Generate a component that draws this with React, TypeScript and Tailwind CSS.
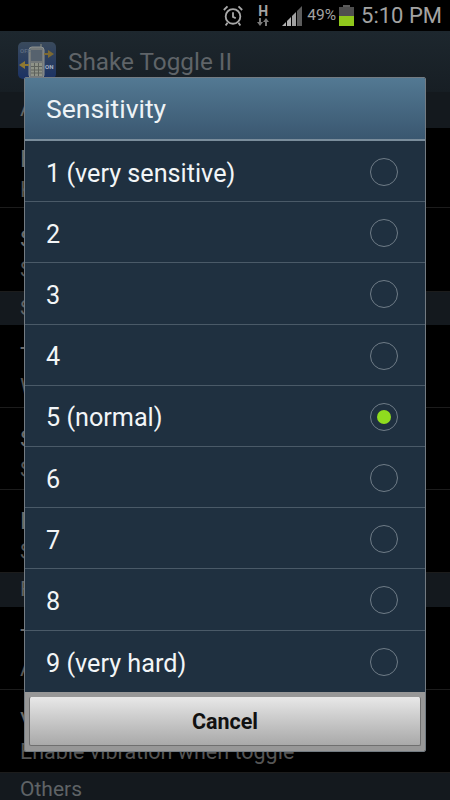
const OPTIONS = ['1 (very sensitive)', '2', '3', '4', '5 (normal)', '6', '7', '8', '9 (very hard)']
const SELECTED = '5 (normal)'

const SETTINGS: Array<{ section: string; height: string; rows: Array<{ title: string; summary: string; height: string }> }> = [
  {
    section: 'Appearance',
    height: 'h-[36px]',
    rows: [
      { title: 'Enable service', summary: 'Keep the service running', height: 'h-[80px]' },
      { title: 'Start at boot', summary: 'Start service on boot', height: 'h-[84px]' },
    ],
  },
  {
    section: 'Shake',
    height: 'h-[33px]',
    rows: [
      { title: 'Toggle', summary: 'Wi-Fi', height: 'h-[83px]' },
      { title: 'Sensitivity', summary: 'Shake sensitivity', height: 'h-[82px]' },
      { title: 'Duration', summary: 'Shake duration', height: 'h-[83px]' },
    ],
  },
  {
    section: 'Feedback',
    height: 'h-[34px]',
    rows: [
      { title: 'Tone', summary: 'Alert when toggle', height: 'h-[83px]' },
      { title: 'Vibration', summary: 'Enable vibration when toggle', height: 'h-[83px]' },
    ],
  },
]

function AppIcon() {
  return (
    <svg width="38" height="37" viewBox="0 0 38 37" className="shrink-0">
      <defs>
        <linearGradient id="ico" x1="0" y1="0" x2="0" y2="1">
          <stop offset="0" stopColor="#3a4a5c" />
          <stop offset="1" stopColor="#1b3264" />
        </linearGradient>
      </defs>
      <rect width="38" height="37" rx="5" fill="url(#ico)" />
      <path d="M23 2v4" stroke="#6f7674" strokeWidth="1.500" />
      <rect x="11" y="5" width="15" height="31" rx="3" fill="#74797a" stroke="#8d9290" />
      <rect x="13" y="8" width="11" height="11" fill="#56626e" />
      <rect x="13" y="21" width="11" height="13" fill="#8f9388" />
      <path d="M13 24.500h11M13 28h11M13 31h11M16.500 21v13M20.500 21v13" stroke="#5e625c" />
      <path d="M26 11h4v-3l6 4-6 4v-3h-4z" fill="#7d6a33" />
      <path d="M11 22h-4v-3l-6 4 6 4v-3h4z" fill="#8f7830" />
      <text x="2" y="11" fontSize="6" fontWeight="700" fill="#5a6a80">OFF</text>
      <text x="27" y="27" fontSize="6" fontWeight="700" fill="#a9b4c6">ON</text>
    </svg>
  )
}

function StatusBar() {
  return (
    <div className="h-[31px] bg-black flex items-center justify-end pr-[8px] text-[#a3a3a3]">
      <svg width="22" height="23" viewBox="0 0 24 24" fill="none" stroke="#a8a8a8" strokeWidth="2" className="mr-[12px]">
        <circle cx="12" cy="13" r="8" />
        <path d="M12 8.500v5l3 1.500" />
        <path d="M2 6l4-4M22 6l-4-4M6 20l-2 3M18 20l2 3" />
      </svg>
      <div className="flex flex-col items-center mr-[12px] w-[14px]">
        <span className="text-[14px] leading-[13px] font-bold">H</span>
        <svg width="14" height="9" viewBox="0 0 14 9" fill="#7a7a7a">
          <path d="M3 0h2v4h2l-3 4-3-4h2zM9 8h2v-4h2l-3-4-3 4h2z" />
        </svg>
      </div>
      <svg width="21" height="21" viewBox="0 0 21 21" className="mr-[4px]">
        <path d="M0 21l4-4v4z" fill="#b0b0b0" />
        <path d="M5 16l4-4v9h-4z" fill="#b0b0b0" />
        <path d="M10 11l4-4v14h-4z" fill="#a0a0a0" />
        <path d="M15 6l5-5v20h-5z" fill="#5c5c5c" />
      </svg>
      <span className="text-[15.500px] leading-none mr-[3px]">49%</span>
      <div className="w-[15px] h-[21px] flex flex-col items-center mr-[7px]">
        <div className="w-[7px] h-[2px] bg-[#5c5c5c]" />
        <div className="w-[15px] h-[9px] bg-[#4f4f4f]" />
        <div className="w-[15px] h-[10px] bg-[#8fc71c]" />
      </div>
      <span className="text-[22px] leading-none">5:10 PM</span>
    </div>
  )
}

function Background() {
  return (
    <div className="h-[800px] overflow-hidden bg-black">
      <StatusBar />
      <div className="h-[61px] bg-gradient-to-b from-[#1d272e] to-[#171e24] flex items-start pl-[18px] pt-[11px] gap-[12px]">
        <AppIcon />
        <span className="text-[24.300px] leading-[40px] text-[#5f6468]">Shake Toggle II</span>
      </div>
      {SETTINGS.map((group) => (
        <div key={group.section}>
          <div className={`${group.height} bg-[#14191e] flex items-center pl-[20px] text-[21px] text-[#5f6366]`}>
            {group.section}
          </div>
          {group.rows.map((row) => (
            <div key={row.title} className={`${row.height} border-b border-[#1c1c1c] pl-[20px] pt-[16px] flex flex-col`}>
              <span className="text-[24px] leading-[30px] text-[#6a6a6a]">{row.title}</span>
              <span className="text-[21.500px] leading-[31px] text-[#555]">{row.summary}</span>
            </div>
          ))}
        </div>
      ))}
      <div className="h-[27px] pt-[6px] bg-[#14191e] flex items-start pl-[20px] text-[21px] leading-[21px] text-[#5f6366]">Others</div>
    </div>
  )
}

function Radio({ checked }: { checked: boolean }) {
  return (
    <div className="w-[28px] h-[28px] rounded-full border border-[#6f7c87] flex items-center justify-center">
      {checked && <div className="w-[14px] h-[14px] rounded-full bg-[#8fdc1f]" />}
    </div>
  )
}

function SensitivityDialog() {
  return (
    <div className="absolute left-[24px] top-[77px] w-[402px] h-[675px] flex flex-col border border-[#737b82] rounded-[2px] overflow-hidden">
      <div className="h-[63px] shrink-0 bg-gradient-to-b from-[#537993] to-[#3a5770] border-b-2 border-[#7a8d9c] flex items-center pl-[21px] text-[26.500px] text-[#eef3f6]">
        Sensitivity
      </div>
      <div className="flex-1 bg-[#1f3040] flex flex-col">
        {OPTIONS.map((option, i) => (
          <div
            key={option}
            className={`h-[61.200px] flex items-center justify-between pl-[21px] pr-[27px] ${
              i < OPTIONS.length - 1 ? 'border-b border-[#4a5a68]' : ''
            }`}
          >
            <span className="text-[25.200px] leading-[30px] mt-[5px] text-[#f2f5f7]">{option}</span>
            <div className="mt-[2px]">
              <Radio checked={option === SELECTED} />
            </div>
          </div>
        ))}
      </div>
      <div className="h-[59px] shrink-0 bg-[#979797] px-[4px] pt-[5px] pb-[5px]">
        <button className="w-full h-full pt-[2px] bg-gradient-to-b from-[#e8e8e8] to-[#a9a9a9] border-b border-x border-[#6f6f6f] rounded-[2px] text-[21.500px] font-bold text-[#111]">
          Cancel
        </button>
      </div>
    </div>
  )
}

export default function App() {
  return (
    <div className="relative w-[450px] h-[800px] overflow-hidden font-['Roboto',sans-serif]">
      <Background />
      <SensitivityDialog />
    </div>
  )
}
